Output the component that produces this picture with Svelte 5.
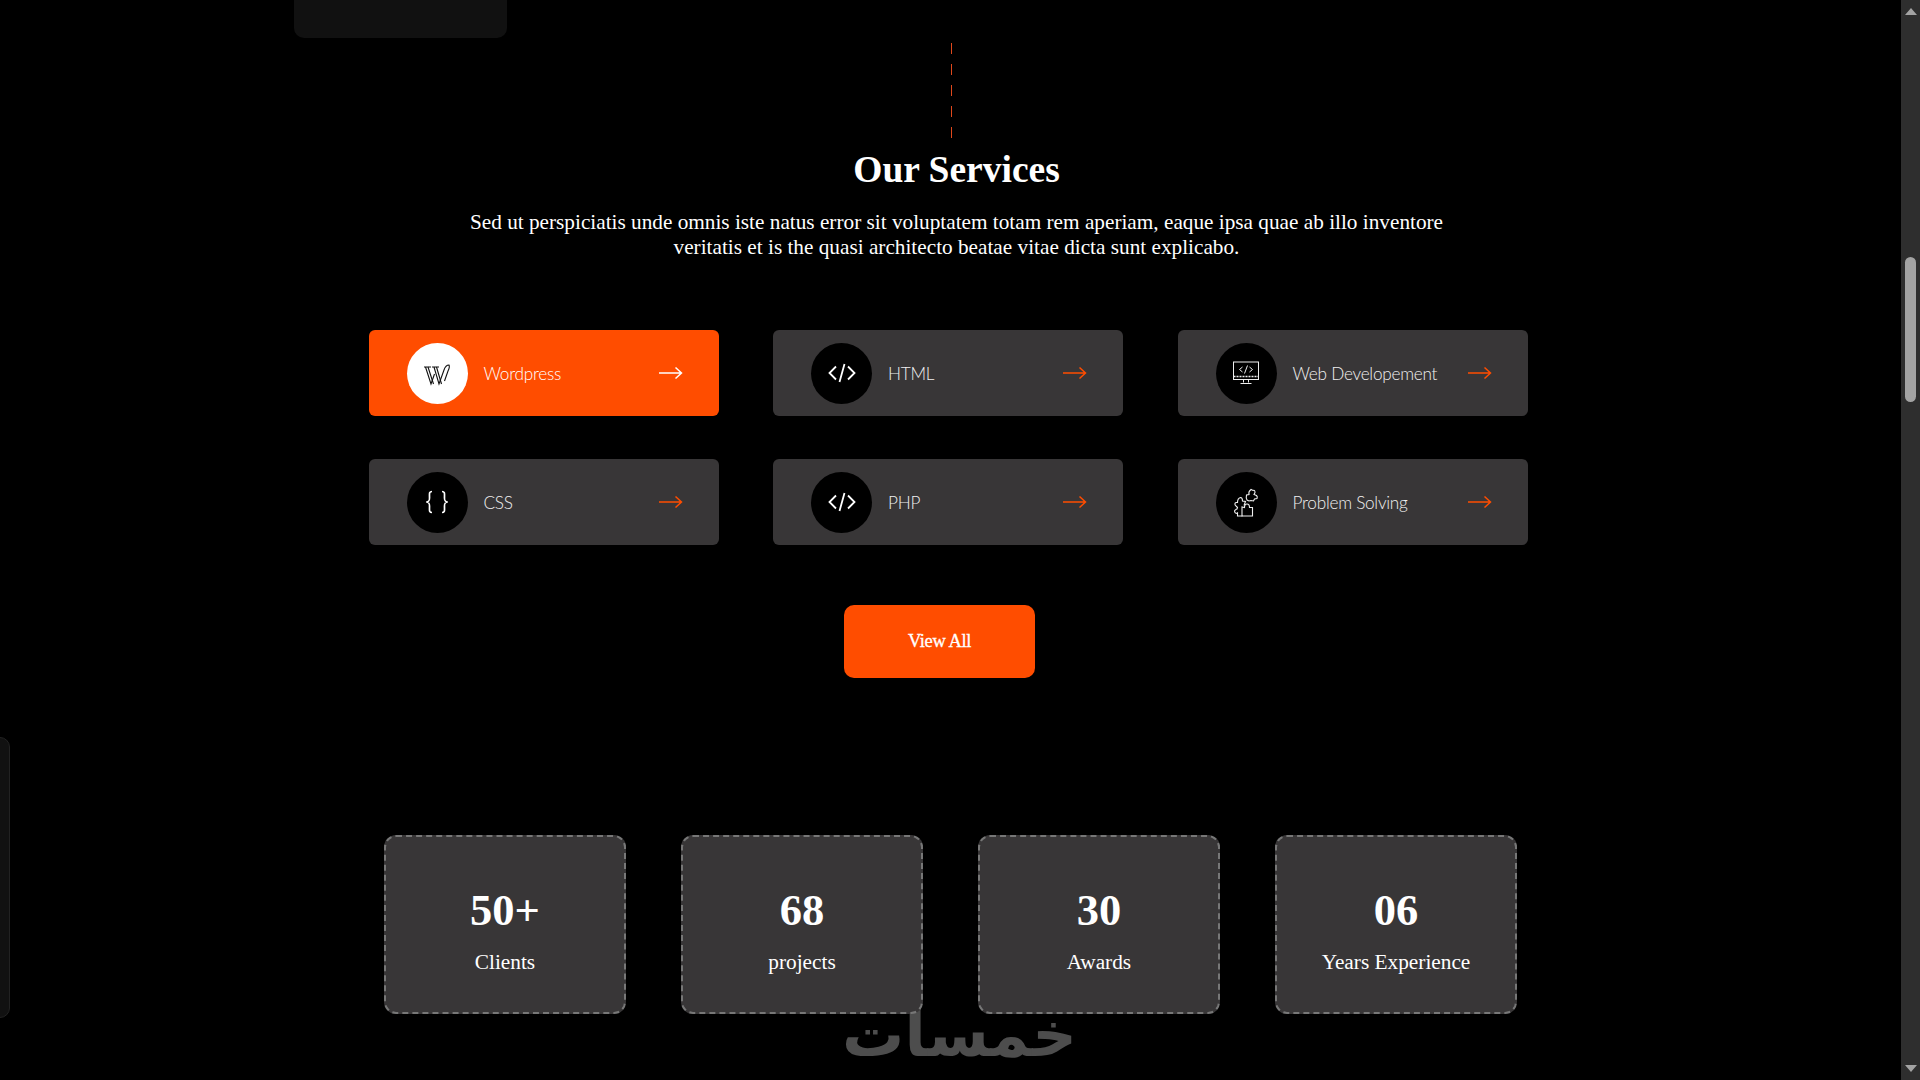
<script lang="ts">
  const services = [
    { name: 'Wordpress', icon: 'wp', active: true },
    { name: 'HTML', icon: 'code' },
    { name: 'Web Developement', icon: 'monitor' },
    { name: 'CSS', icon: 'braces' },
    { name: 'PHP', icon: 'code' },
    { name: 'Problem Solving', icon: 'puzzle' },
  ];

  const stats = [
    { value: '50+', label: 'Clients' },
    { value: '68', label: 'projects' },
    { value: '30', label: 'Awards' },
    { value: '06', label: 'Years Experience' },
  ];
</script>

<div class="page">
  <main class="main">
    <div class="top-card"></div>
    <div class="side-panel"></div>

    <section class="services">
      <div class="dash"></div>
      <h2>Our Services</h2>
      <p class="intro">
        Sed ut perspiciatis unde omnis iste natus error sit voluptatem totam rem aperiam, eaque ipsa quae ab illo inventore
        veritatis et is the quasi architecto beatae vitae dicta sunt explicabo.
      </p>

      <div class="grid">
        {#each services as s}
          <a class="card" class:active={s.active} href="#top">
            <span class="circle">
              {#if s.icon === 'wp'}
                <svg class="wp" width="28" height="24" viewBox="0 0 28 24" fill="none" stroke="#111" stroke-width="1.100">
                  <path d="M1 4h7M2.500 4l5.500 17 3.500-10M9 4h7M11 4l5 17 5-14c1-3 3-5 5-5 1 2 0 4-1 6l-3.500 10" />
                  <path d="M5 4l5.500 17M13.500 4l5 17" />
                </svg>
              {:else if s.icon === 'code'}
                <svg width="28" height="20" viewBox="0 0 28 20" fill="none" stroke="#fff" stroke-width="1.800">
                  <path d="M8 3.500 1.500 10 8 16.500M20 3.500 26.500 10 20 16.500M16.500 1 11.500 19" />
                </svg>
              {:else if s.icon === 'braces'}
                <svg width="22" height="24" viewBox="0 0 22 24" fill="none" stroke="#fff" stroke-width="1.700">
                  <path d="M6 1.500c-3 0-2.500 2-2.500 5s.5 4.500-2.500 5.500c3 1 2.500 2.500 2.500 5.500s-.5 5 2.500 5" />
                  <path d="M16 1.500c3 0 2.500 2 2.500 5s-.5 4.500 2.500 5.500c-3 1-2.500 2.500-2.500 5.500s.5 5-2.500 5" />
                </svg>
              {:else if s.icon === 'monitor'}
                <svg width="28" height="24" viewBox="0 0 28 24" fill="none" stroke="#eee" stroke-width="1">
                  <rect x="1.500" y="1" width="25" height="17.500" />
                  <path d="M1.500 15.500h25" stroke-dasharray="2 1" stroke-width="1.500" />
                  <path d="M11.500 18.500v3M16.500 18.500v3M8.500 22.500h11" />
                  <path d="M10.500 6 7.500 8.500 10.500 11M17.500 6l3 2.500-3 2.500M15.500 4.500l-3 8" />
                </svg>
              {:else}
                <svg width="28" height="30" viewBox="0 0 28 30" fill="none" stroke="#eee" stroke-width="1.100">
                  <path d="M15 13c-1-2-1-3-.5-5l2.500-.5c-.5-2 .5-4 2-5l2 1c1.500-.5 2 0 2 2l-1 2 2.500 1c1 1 1 2 .5 3l-2.500 .5-1 2-2.500-.5-2 .5z" />
                  <path d="M4 19c-1.500-1-1.500-3 0-3.500h1.500c0-2 1-4.500 3-5 1.500 0 2 2 2 3.500l3 .5-1.500 4" />
                  <path d="M4 19l1.500 1.500-.5 1.500c-2 .5-3 2-2 3.500 .5 1 2 1 2.500 .5v3h5" />
                  <path d="M10 29v-9l2.500 .5c0-2 1-3.500 2.500-3.500s2.500 1.500 2.500 3.500h3v8.500z" />
                </svg>
              {/if}
            </span>
            <span class="name">{s.name}</span>
            <svg class="arrow" width="24" height="14" viewBox="0 0 24 14" fill="none" stroke="currentColor" stroke-width="1.500">
              <path d="M0 7h22.500M16.500 1.500 22.500 7l-6 5.500" />
            </svg>
          </a>
        {/each}
      </div>

      <a class="view-all" href="#top">View All</a>
    </section>

    <section class="stats">
      <span class="watermark" dir="rtl">خمسات</span>
      {#each stats as st}
        <div class="stat">
          <strong>{st.value}</strong>
          <span>{st.label}</span>
        </div>
      {/each}
    </section>
  </main>

  <aside class="scrollbar">
    <span class="tri up"></span>
    <div class="track"><div class="thumb"></div></div>
    <span class="tri down"></span>
  </aside>
</div>

<style>
  :global(body) {
    margin: 0;
    background: #000;
  }
  .page {
    display: flex;
    height: 1080px;
    overflow: hidden;
    background: #000;
    color: #fff;
    font-family: 'Liberation Serif', serif;
  }
  .main {
    position: relative;
    flex: 1 1 auto;
    min-width: 0;
  }
  .top-card {
    position: absolute;
    left: 294px;
    top: -20px;
    width: 213px;
    height: 58px;
    background: #111;
    border-radius: 10px;
  }
  .side-panel {
    position: absolute;
    left: -12px;
    top: 737px;
    width: 20px;
    height: 279px;
    background: #111;
    border: 1px solid #222;
    border-radius: 10px;
  }
  .services {
    display: flex;
    flex-direction: column;
    align-items: center;
    padding-top: 43px;
  }
  .dash {
    width: 1px;
    height: 95px;
    margin-left: 2px;
    background: repeating-linear-gradient(to bottom, #e0481c 0 11px, transparent 11px 21px);
  }
  h2 {
    margin: 10px 0 0 12px;
    font-size: 37.5px;
    line-height: 43px;
    font-weight: 700;
  }
  .intro {
    width: 1000px;
    margin: 19px 0 0 12px;
    font-size: 21.25px;
    line-height: 24.5px;
    text-align: center;
  }
  .grid {
    display: grid;
    grid-template-columns: repeat(3, 350px);
    column-gap: 54.5px;
    row-gap: 43px;
    margin-top: 71px;
    margin-left: -5px;
  }
  .card {
    display: flex;
    align-items: center;
    height: 86px;
    padding: 0 36px 0 38px;
    box-sizing: border-box;
    background: #383637;
    border-radius: 6px;
    color: #ff4d00;
    text-decoration: none;
  }
  .card.active {
    background: #ff4d00;
    color: #fff;
  }
  .circle {
    display: flex;
    align-items: center;
    justify-content: center;
    flex: 0 0 61px;
    height: 61px;
    border-radius: 50%;
    background: #000;
  }
  .active .circle {
    background: #fff;
  }
  .wp {
    margin-top: 4px;
  }
  .name {
    flex: 1 1 auto;
    margin-left: 16px;
    font-family: 'Lato', sans-serif;
    font-weight: 300;
    font-size: 17.2px;
    letter-spacing: -0.25px;
    color: #f0f0f0;
  }
  .active .name {
    color: #fff;
  }
  .view-all {
    display: flex;
    align-items: center;
    justify-content: center;
    width: 191px;
    height: 73px;
    margin: 60px 0 0 -22px;
    background: #ff4d00;
    border-radius: 10px;
    color: #fff;
    font-size: 18.5px;
    letter-spacing: -0.4px;
    -webkit-text-stroke: 0.3px #fff;
    text-decoration: none;
  }
  .stats {
    position: relative;
    display: flex;
    justify-content: center;
    gap: 55px;
    margin-top: 157px;
  }
  .watermark {
    position: absolute;
    left: 847px;
    top: 155px;
    width: 230px;
    text-align: center;
    font-family: 'DejaVu Sans', sans-serif;
    font-weight: 700;
    font-size: 62px;
    line-height: 90px;
    color: #4d4d4d;
  }
  .stat {
    position: relative;
    display: flex;
    flex-direction: column;
    align-items: center;
    width: 242px;
    height: 179px;
    padding-top: 47px;
    box-sizing: border-box;
    background: #383637;
    border: 2px dashed #777;
    border-radius: 12px;
  }
  .stat strong {
    font-size: 44.5px;
    line-height: 52px;
  }
  .stat span {
    margin-top: 14px;
    font-size: 21.3px;
    line-height: 25px;
  }
  .scrollbar {
    display: flex;
    flex-direction: column;
    align-items: center;
    flex: 0 0 19px;
    background: #2e2e2e;
  }
  .tri {
    width: 0;
    height: 0;
    border-left: 6.5px solid transparent;
    border-right: 6.5px solid transparent;
  }
  .tri.up {
    margin-top: 8px;
    border-bottom: 7px solid #a3a3a3;
  }
  .tri.down {
    margin-bottom: 8px;
    border-top: 7px solid #a3a3a3;
  }
  .track {
    flex: 1 1 auto;
    width: 100%;
  }
  .thumb {
    width: 11px;
    height: 145px;
    margin: 242px auto 0;
    border-radius: 6px;
    background: #a3a3a3;
  }
</style>
